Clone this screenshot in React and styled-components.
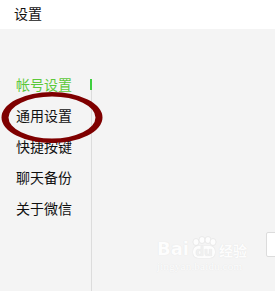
import styled, { createGlobalStyle } from "styled-components";

const Global = createGlobalStyle`
html, body {
  margin: 0;
  padding: 0;
  height: 100%;
  overflow: hidden;
  background: #f4f4f4;
}
#root {
  height: 100%;
}
`

const Page = styled.div`
position: relative;
display: flex;
flex-direction: column;
height: 291px;
font-family: "Noto Sans CJK SC", "Noto Sans", sans-serif;
`

const Header = styled.div`
height: 29px;
background: #fff;
display: flex;
align-items: center;
padding-left: 14px;
font-size: 14px;
color: #111;
box-sizing: border-box;
padding-bottom: 3px;
`

const Body = styled.div`
flex: 1;
display: flex;
background: #f4f4f4;
`

const Sidebar = styled.div`
width: 92px;
display: flex;
flex-direction: column;
padding-top: 49px;
box-sizing: border-box;
`

const ActiveItem = styled.div`
position: relative;
height: 12px;
line-height: 12px;
padding-left: 16px;
font-size: 14px;
color: #5cc93a;
&::after {
  content: "";
  position: absolute;
  right: 0;
  top: 1px;
  width: 2px;
  height: 11px;
  background: #3fcf3f;
}
`

const List = styled.div`
flex: 1;
width: 91px;
border-right: 1px solid #dcdcdc;
padding-top: 10px;
`

const Item = styled.div`
height: 31px;
line-height: 31px;
padding-left: 16px;
font-size: 14px;
color: #111;
`

const Content = styled.div`
flex: 1;
padding: 203px 0 0 174px;
overflow: hidden;
`

const Field = styled.div`
width: 30px;
height: 23px;
background: #fff;
border: 1px solid #dcdcdc;
border-radius: 2px;
`

const Ring = styled.svg`
position: absolute;
left: 0;
top: 91px;
`

const Watermark = styled.div`
position: absolute;
left: 157px;
top: 236px;
display: flex;
flex-direction: column;
align-items: flex-start;
color: #fff;
font-family: "DejaVu Sans", sans-serif;
text-shadow: 0 0 1px #dcdcdc;
opacity: 0.85;
`

const Logo = styled.div`
display: flex;
align-items: flex-end;
gap: 2px;
`

const Bai = styled.span`
font-size: 18px;
font-weight: bold;
line-height: 18px;
`

const Paw = styled.span`
position: relative;
display: inline-flex;
flex-direction: column;
align-items: center;
`

const Du = styled.span`
font-size: 12px;
font-weight: bold;
line-height: 12px;
background: #fff;
color: #f0f0f0;
border-radius: 5px;
padding: 0 2px;
box-shadow: 0 0 1px #ccc;
`

const Jingyan = styled.span`
font-family: "Noto Sans CJK SC", sans-serif;
font-size: 14px;
line-height: 16px;
font-weight: bold;
`

const Url = styled.span`
font-family: "Liberation Serif", serif;
font-size: 11px;
margin-top: 2px;
letter-spacing: 0.2px;
`

export default function App(){
    return(
        <Page>
            <Global/>
            <Header>设置</Header>
            <Body>
                <Sidebar>
                    <ActiveItem>帐号设置</ActiveItem>
                    <List>
                        <Item>通用设置</Item>
                        <Item>快捷按键</Item>
                        <Item>聊天备份</Item>
                        <Item>关于微信</Item>
                    </List>
                </Sidebar>
                <Content>
                    <Field/>
                </Content>
            </Body>
            <Ring width="106" height="54" viewBox="0 0 106 54">
                <path
                    fillRule="evenodd"
                    fill="#7f0000"
                    d="M1.5 26.5 A50.5 25.5 0 1 0 102.5 26.5 A50.5 25.5 0 1 0 1.5 26.5 Z M8.5 26.5 A43.5 21 0 1 0 95.5 26.5 A43.5 21 0 1 0 8.5 26.5 Z"
                />
            </Ring>
            <Watermark>
                <Logo>
                    <Bai>Bai</Bai>
                    <Paw>
                        <svg width="26" height="10" viewBox="0 0 26 10">
                            <ellipse cx="5" cy="6" rx="3" ry="3.5" fill="#fff" stroke="#ddd" strokeWidth="0.6"/>
                            <ellipse cx="11" cy="4" rx="3" ry="3.5" fill="#fff" stroke="#ddd" strokeWidth="0.6"/>
                            <ellipse cx="17" cy="4" rx="3" ry="3.5" fill="#fff" stroke="#ddd" strokeWidth="0.6"/>
                            <ellipse cx="22" cy="6" rx="3" ry="3.5" fill="#fff" stroke="#ddd" strokeWidth="0.6"/>
                        </svg>
                        <Du>du</Du>
                    </Paw>
                    <Jingyan>经验</Jingyan>
                </Logo>
                <Url>jingyan.baidu.com</Url>
            </Watermark>
        </Page>
    )
}
